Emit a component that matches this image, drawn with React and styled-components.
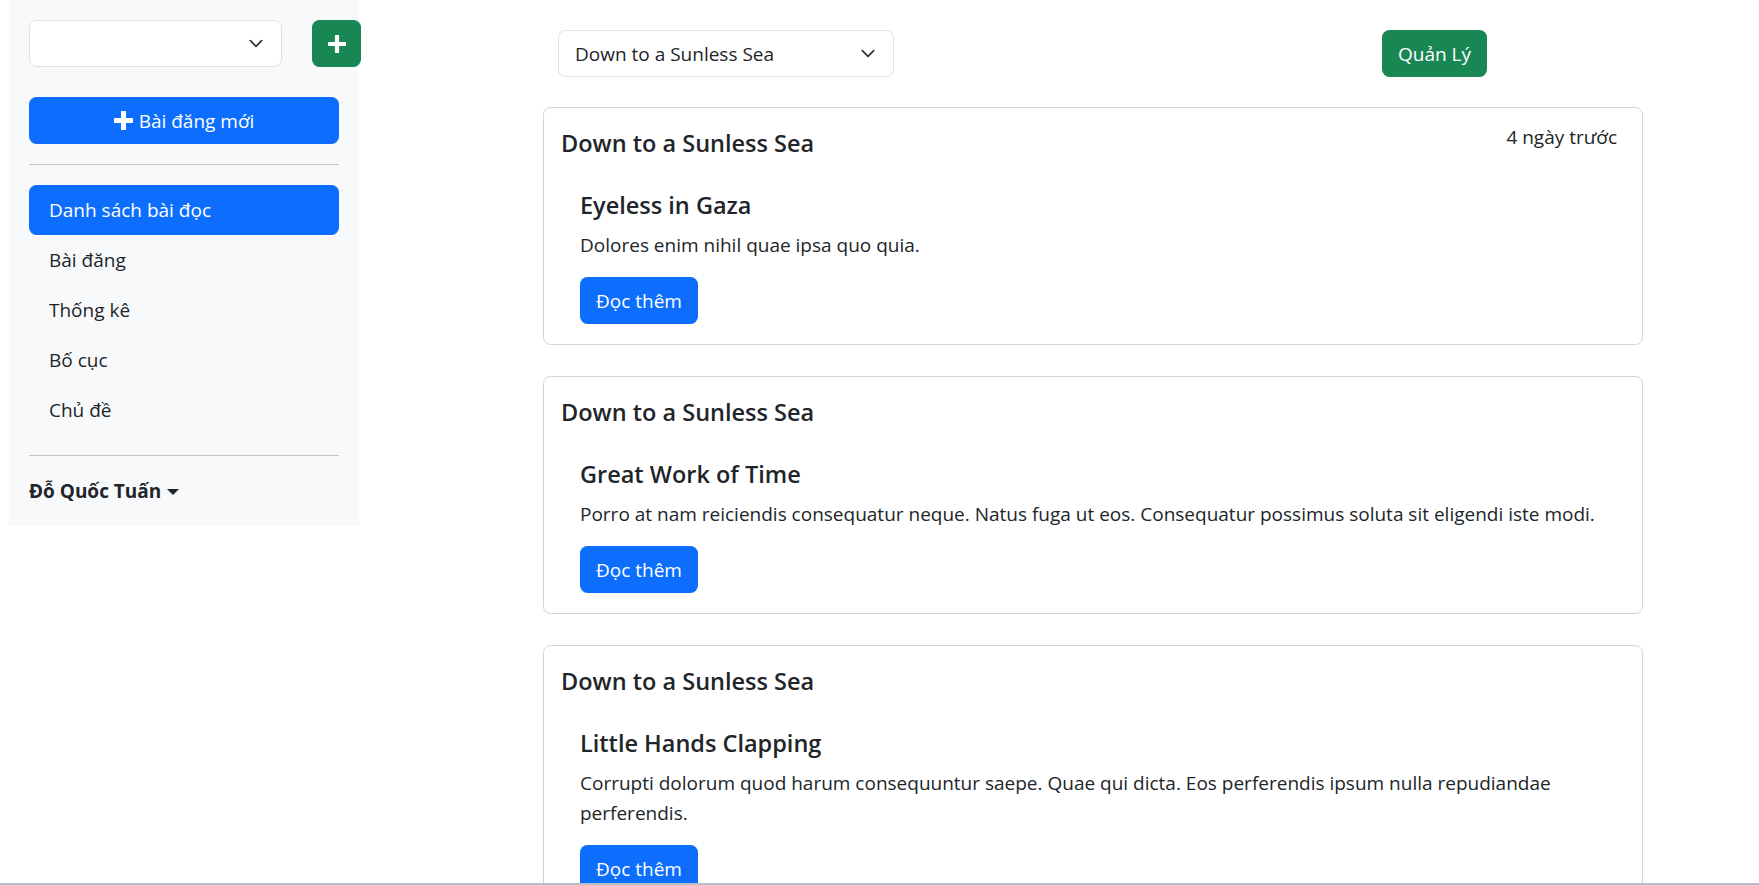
import React from "react";
import styled, { createGlobalStyle } from "styled-components";

const GlobalStyle = createGlobalStyle`
  * { box-sizing: border-box; }
  html, body { margin: 0; padding: 0; background: #fff; }
  body {
    font-family: "Open Sans", "Noto Sans", sans-serif;
    font-size: 19px;
    line-height: 30px;
    color: #212529;
  }
`;

const Layout = styled.div`
  display: grid;
  grid-template-columns: 350px 1100px;
  column-gap: 184px;
  padding-left: 9px;
  align-items: start;
`;

const Sidebar = styled.aside`
  background: #f8f9fa;
  padding: 20px;
  display: flex;
  flex-direction: column;
`;

const SideTop = styled.div`
  display: flex;
  gap: 30px;
  margin-bottom: 30px;
`;

const SelectBox = styled.div`
  flex-shrink: 0;
  width: ${(p) => p.$w}px;
  height: 47px;
  border: 1px solid #dee2e6;
  border-radius: 7.5px;
  background: #fff;
  display: flex;
  align-items: center;
  justify-content: space-between;
  padding: 0 15px 0 16px;
  font-size: 19px;
  color: #212529;
`;

const IconButton = styled.button`
  flex-shrink: 0;
  width: 49px;
  height: 47px;
  border: none;
  border-radius: 7.5px;
  background: #198754;
  color: #fff;
  display: flex;
  align-items: center;
  justify-content: center;
  padding: 0;
`;

const Button = styled.button`
  border: none;
  border-radius: 7.5px;
  background: ${(p) => (p.$variant === "success" ? "#198754" : "#0d6efd")};
  color: #fff;
  font-family: inherit;
  font-size: 19px;
  line-height: 30px;
  padding: 8.5px ${(p) => (p.$block ? "15px" : "16px")};
  height: 47px;
  display: inline-flex;
  align-items: center;
  justify-content: center;
  gap: 6px;
  width: ${(p) => (p.$block ? "100%" : "auto")};
  cursor: pointer;
`;

const Rule = styled.hr`
  border: none;
  border-top: 1px solid #c5c6c7;
  margin: 20px 0;
  height: 0;
`;

const NavList = styled.nav`
  display: flex;
  flex-direction: column;
`;

const NavItem = styled.a`
  display: block;
  height: 50px;
  line-height: 50px;
  padding: 0 20px;
  border-radius: 7.5px;
  font-size: 19px;
  text-decoration: none;
  color: ${(p) => (p.$active ? "#fff" : "#212529")};
  background: ${(p) => (p.$active ? "#0d6efd" : "transparent")};
`;

const UserToggle = styled.div`
  font-weight: 700;
  font-size: 19px;
  line-height: 30px;
  display: flex;
  align-items: center;
  gap: 6px;
`;

const Caret = styled.span`
  width: 0;
  height: 0;
  border-left: 6px solid transparent;
  border-right: 6px solid transparent;
  border-top: 6px solid #212529;
  margin-top: 2px;
`;

const Main = styled.main`
  display: flex;
  flex-direction: column;
`;

const TopBar = styled.div`
  display: flex;
  align-items: center;
  padding: 30px 156px 0 15px;
  justify-content: space-between;
  margin-bottom: 30px;
`;

const Cards = styled.div`
  display: flex;
  flex-direction: column;
  gap: 31px;
`;

const Card = styled.article`
  border: 1px solid #d3d4d5;
  border-radius: 7.5px;
  padding: 20px 20px 20px 17px;
  background: #fff;
`;

const CardHead = styled.div`
  display: flex;
  justify-content: space-between;
  align-items: flex-start;
`;

const CardTitle = styled.h5`
  margin: 0;
  font-size: 23.5px;
  line-height: 30px;
  font-weight: 600;
`;

const DateText = styled.span`
  font-size: 19px;
  line-height: 30px;
  margin-top: -6px;
  margin-right: 5px;
`;

const Post = styled.div`
  padding: 32px 0 0 19px;
`;

const PostTitle = styled.h5`
  margin: 0 0 10px;
  font-size: 23.5px;
  line-height: 30px;
  font-weight: 600;
`;

const PostText = styled.p`
  margin: 0 0 17px;
  font-size: 19px;
  line-height: 30px;
`;

const BottomEdge = styled.div`
  position: fixed;
  left: 0;
  right: 0;
  bottom: 0;
  height: 2px;
  background: #b8bec7;
`;

const Chevron = () => (
  <svg width="20" height="15" viewBox="0 0 16 16" fill="none">
    <path d="m2 5 6 6 6-6" stroke="#343a40" strokeWidth="2" strokeLinecap="round" strokeLinejoin="round" />
  </svg>
);

const Plus = ({ size = 18, stroke = 4.5 }) => (
  <svg width={size} height={size} viewBox={`0 0 ${size} ${size}`}>
    <path
      d={`M${size / 2} 1 V${size - 1} M1 ${size / 2} H${size - 1}`}
      stroke="#fff"
      strokeWidth={stroke}
      strokeLinecap="round"
    />
  </svg>
);

const posts = [
  {
    title: "Eyeless in Gaza",
    text: "Dolores enim nihil quae ipsa quo quia.",
    date: "4 ngày trước",
  },
  {
    title: "Great Work of Time",
    text: "Porro at nam reiciendis consequatur neque. Natus fuga ut eos. Consequatur possimus soluta sit eligendi iste modi.",
  },
  {
    title: "Little Hands Clapping",
    text: "Corrupti dolorum quod harum consequuntur saepe. Quae qui dicta. Eos perferendis ipsum nulla repudiandae perferendis.",
  },
];

const navItems = ["Danh sách bài đọc", "Bài đăng", "Thống kê", "Bố cục", "Chủ đề"];

export default function App() {
  return (
    <>
      <GlobalStyle />
      <Layout>
        <Sidebar>
          <SideTop>
            <SelectBox $w={253}>
              <span />
              <Chevron />
            </SelectBox>
            <IconButton aria-label="add">
              <Plus size={18} stroke={4.2} />
            </IconButton>
          </SideTop>
          <Button $block>
            <Plus size={19} stroke={5} />
            Bài đăng mới
          </Button>
          <Rule />
          <NavList>
            {navItems.map((n, i) => (
              <NavItem key={n} href="#" $active={i === 0}>
                {n}
              </NavItem>
            ))}
          </NavList>
          <Rule />
          <UserToggle>
            Đỗ Quốc Tuấn
            <Caret />
          </UserToggle>
        </Sidebar>
        <Main>
          <TopBar>
            <SelectBox $w={336}>
              <span>Down to a Sunless Sea</span>
              <Chevron />
            </SelectBox>
            <Button $variant="success">Quản Lý</Button>
          </TopBar>
          <Cards>
            {posts.map((p) => (
              <Card key={p.title}>
                <CardHead>
                  <CardTitle>Down to a Sunless Sea</CardTitle>
                  {p.date && <DateText>{p.date}</DateText>}
                </CardHead>
                <Post>
                  <PostTitle>{p.title}</PostTitle>
                  <PostText>{p.text}</PostText>
                  <Button>Đọc thêm</Button>
                </Post>
              </Card>
            ))}
          </Cards>
        </Main>
      </Layout>
      <BottomEdge />
    </>
  );
}
